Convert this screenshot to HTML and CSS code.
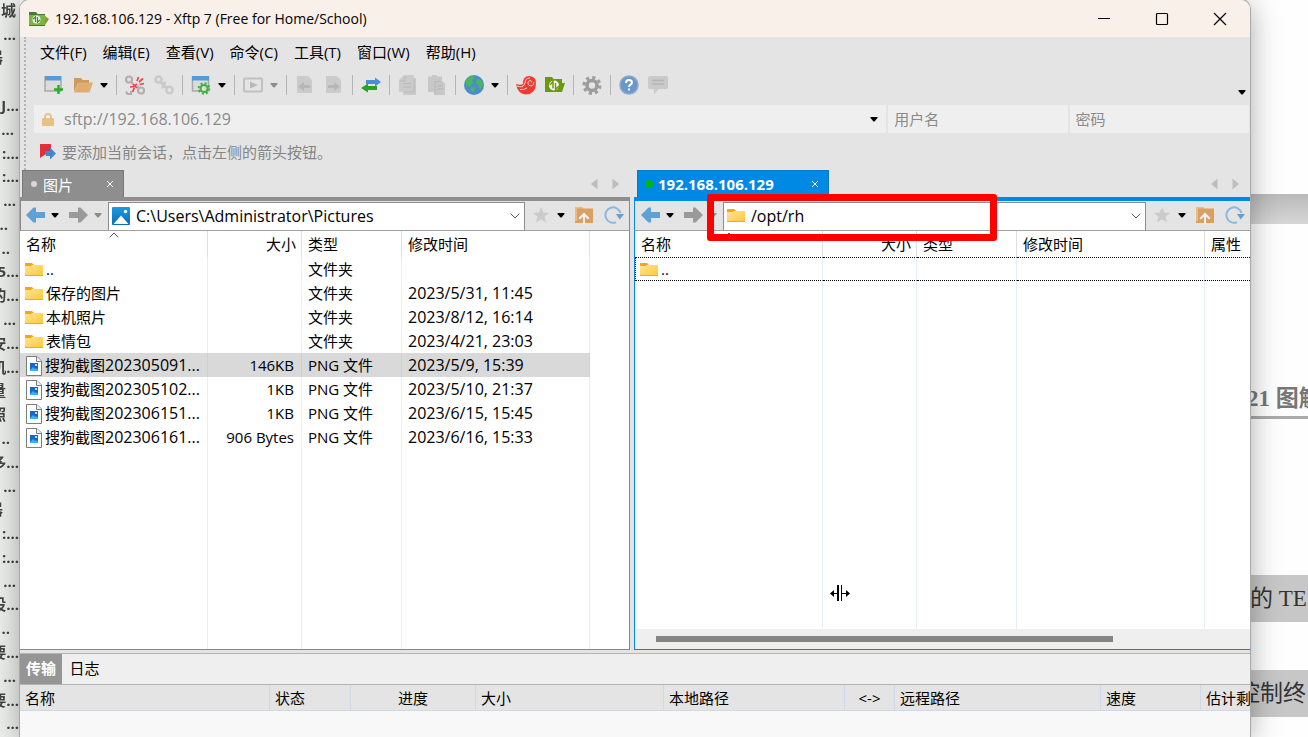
FILE: index.html
```html
<!DOCTYPE html>
<html lang="zh-CN">
<head>
<meta charset="utf-8">
<title>192.168.106.129 - Xftp 7</title>
<link rel="stylesheet" href="styles.css">
</head>
<body>
<svg class="defs" aria-hidden="true">
  <defs>
    <linearGradient id="gFolder" x1="0" y1="0" x2="1" y2="1"><stop offset="0" stop-color="#ffe499"/><stop offset="1" stop-color="#ffc933"/></linearGradient>
    <linearGradient id="gPic" x1="0" y1="0" x2="0" y2="1"><stop offset="0" stop-color="#1a9be0"/><stop offset="1" stop-color="#0d6cbd"/></linearGradient>
  </defs>
  <symbol id="folder" viewBox="0 0 18 15"><path d="M0 1h7l2 2h-2L6 5H0z" fill="#f3a712"/><path d="M0 4h6l2-1h10v11H0z" fill="url(#gFolder)"/><path d="M0 13.500h18" stroke="#e8ae28"/></symbol>
  <symbol id="file" viewBox="0 0 16 20"><path d="M.5.5H11L15.500 5v14.500H.5z" fill="#fff" stroke="#7c7c7c"/><path d="M10.500.5V5.500h5" fill="#eee" stroke="#7c7c7c"/><rect x="4" y="7" width="8" height="8" fill="#1b66c4"/><path d="M4 15v-1l3-3 2 2 1-1 2 2v1z" fill="#35b4f2"/><circle cx="10" cy="9" r="1" fill="#fff"/></symbol>
  <symbol id="picture" viewBox="0 0 18 18"><rect width="18" height="18" rx="1" fill="url(#gPic)"/><path d="M1.500 17 9 8.500 16.500 17z" fill="#fff"/><circle cx="13.500" cy="4.500" r="1.700" fill="#fff"/></symbol>
  <symbol id="caret" viewBox="0 0 8 5"><path d="M.5 0h7v1L4.500 4.500h-1L.5 1z" fill="currentColor"/></symbol>
  <symbol id="back" viewBox="0 0 20 16"><path d="M0 8 7.500.5H10V5h9v6h-9v4.500H7.500z" fill="#5fa0d6"/></symbol>
  <symbol id="forward" viewBox="0 0 20 16"><path d="M19 8 11.500.5H9V5H0v6h9v4.500h2.500z" fill="#9a9a9a"/></symbol>
  <symbol id="star" viewBox="0 0 18 18"><path d="m9 1 2.200 5.600 5.800.4-4.500 3.800 1.500 5.700L9 13.300l-5 3.200 1.500-5.700L1 7l5.800-.4z" fill="#cbcbcb"/></symbol>
  <symbol id="up" viewBox="0 0 18 18"><path d="M0 1h7l1 1.500h10V17H0z" fill="#d9a062"/><path d="M0 1h7l1 1.500H2V15H0z" fill="#e9bc84"/><path d="m9 6.500 5.500 5.500-1.500 1.500-3-2.700V17.500H8v-6.700l-3 2.700L3.500 12z" fill="#f1f1f1"/></symbol>
  <symbol id="refresh" viewBox="0 0 20 18"><path d="M12 16.200A7.700 7.700 0 1 1 16.500 7" fill="none" stroke="#8bb8e0" stroke-width="2"/><path d="M12 8H20l-4.300 5.500z" fill="#5fa0d6"/></symbol>
  <symbol id="chevron" viewBox="0 0 10 6"><path d="m.7.7 4.300 4.300L9.300.7" fill="none" stroke="#555"/></symbol>
  <symbol id="sort" viewBox="0 0 10 6"><path d="m.7 5.300 4.300-4.300 4.300 4.300" fill="none" stroke="#555"/></symbol>
  <symbol id="cross" viewBox="0 0 8 8"><path d="m1 1 6 6m0-6L1 7" stroke="#fff" stroke-width="1"/></symbol>
  <symbol id="tri-l" viewBox="0 0 8 12"><path d="M7.500.5v11L1 6z" fill="#bdbdbd"/></symbol>
  <symbol id="tri-r" viewBox="0 0 8 12"><path d="M.5.5v11L7 6z" fill="#bdbdbd"/></symbol>
</svg>

<div class="desktop">
  <div class="behind-left" aria-hidden="true">
    <p class="e16">城</p><p class="e16">...</p><p class="e4">器</p><p></p><p>J...</p><p class="e14">...</p><p>:...</p><p>:...</p><p class="e16">...</p><p class="e8">..</p><p class="e10">..</p><p>5...</p><p>的...</p><p class="e16">...</p><p>安...</p><p>机...</p><p class="e6">量</p><p class="e6">照</p><p class="e10">..</p><p>多...</p><p class="e16">...</p><p class="e4">器</p><p>:...</p><p>:...</p><p class="e16">...</p><p>设...</p><p class="e10">..</p><p>要...</p><p class="e16">...</p><p>要...</p><p>...</p>
  </div>

  <main class="window">
    <header class="titlebar">
      <svg class="app-icon" viewBox="0 0 20 16"><path d="M0 1h7l1.500 2H16v12H0z" fill="#3f7f35"/><path d="M0 4h16v10H0z" fill="#7cb342"/><path d="m16 5 4 3-4 6z" fill="#8a9a2e"/><circle cx="7.500" cy="8.500" r="4" fill="#eaf5df"/><path d="M6.500 5v6M8.500 6v6M4 8l2.500-2M11 9l-2.500 2" stroke="#4b8a2e" stroke-width="1.200"/></svg>
      <h1>192.168.106.129 - Xftp 7 (Free for Home/School)</h1>
      <div class="win-buttons">
        <button aria-label="最小化"><svg viewBox="0 0 14 14"><path d="M1 6.500h12" stroke="#000"/></svg></button>
        <button aria-label="最大化"><svg viewBox="0 0 14 14"><rect x="1.500" y="1.500" width="11" height="11" rx="1" fill="none" stroke="#000" stroke-width="1.200"/></svg></button>
        <button aria-label="关闭"><svg viewBox="0 0 14 14"><path d="m1 1 12 12m0-12L1 13" stroke="#000" stroke-width="1.200"/></svg></button>
      </div>
    </header>

    <section class="top">
      <nav class="menu">
        <button>文件(F)</button><button>编辑(E)</button><button>查看(V)</button><button>命令(C)</button><button>工具(T)</button><button>窗口(W)</button><button>帮助(H)</button>
      </nav>

      <div class="toolbar">
        <div class="group">
          <button aria-label="新建会话"><svg viewBox="0 0 20 20"><rect x="1" y="2" width="16" height="14" fill="#dcdcdc" stroke="#a9a9a9" stroke-width="1.500"/><path d="M1 1h16v4.500H1z" fill="#559bd8"/><path d="M14.500 10v9M10 14.500h9" stroke="#27ae27" stroke-width="2.400"/></svg></button>
          <button aria-label="打开"><svg viewBox="0 0 20 20"><path d="M1 3h7l1.500 2H16v3H5L1 17z" fill="#cf9a5b"/><path d="M5.500 7.500H20L16.500 17.500H1z" fill="#e0ad70"/></svg></button>
          <button class="drop" aria-label="打开选项"><svg><use href="#caret"/></svg></button>
        </div>
        <div class="group">
          <button aria-label="断开"><svg viewBox="0 0 20 20"><g fill="none" stroke="#b0b0b0" stroke-width="2.200"><circle cx="4" cy="4.500" r="3"/><circle cx="16" cy="15.500" r="3"/><path d="m6 7 2 2M12 11l2 2"/><path d="M2 16.500q-1 2 1 2.500h3v-3"/></g><path d="m12 6 1.500-4M14 7l4-3.500M14.500 9.500l4.500-1M5 12l4-.5M7.500 17l2-4.500M8 9l4 4M12 9l-3.500 2.500" stroke="#e8444c" stroke-width="1.700"/></svg></button>
          <button aria-label="重新连接"><svg viewBox="0 0 20 20"><g fill="none" stroke="#cacaca" stroke-width="2.600"><circle cx="4.500" cy="4.500" r="3"/><circle cx="15.500" cy="15" r="3.200"/><path d="m6.500 7 3 3q1 3-2 2M12 8q-3-1-2 2l3 3"/></g></svg></button>
        </div>
        <div class="group">
          <button aria-label="属性"><svg viewBox="0 0 20 20"><rect x="1.500" y="2" width="16" height="14" fill="#dcdcdc" stroke="#a9a9a9" stroke-width="1.500"/><path d="M1 1h17v4.500H1z" fill="#559bd8"/><circle cx="13" cy="13.500" r="3.500" fill="#ddd" stroke="#3fb03f" stroke-width="2"/><circle cx="13" cy="13.500" r="5.300" fill="none" stroke="#3fb03f" stroke-width="2" stroke-dasharray="2 2.160"/></svg></button>
          <button class="drop" aria-label="属性选项"><svg><use href="#caret"/></svg></button>
        </div>
        <div class="group">
          <button aria-label="运行"><svg viewBox="0 0 20 20"><rect x="1" y="3.500" width="18" height="13" rx="1" fill="none" stroke="#c0c0c0" stroke-width="2"/><path d="m7 6.500 8 3.500-8 3.500z" fill="#b9b9b9"/></svg></button>
          <button class="drop dim" aria-label="运行选项"><svg><use href="#caret"/></svg></button>
        </div>
        <div class="group">
          <button aria-label="传到左侧"><svg viewBox="0 0 20 20"><path d="M2 1h11l4 4v13H2z" fill="#cbcbcb"/><path d="M3 11.500 9 7v3h6v3H9v3z" fill="#b7b7b7"/></svg></button>
          <button aria-label="传到右侧"><svg viewBox="0 0 20 20"><path d="M2 1h11l4 4v13H2z" fill="#cbcbcb"/><path d="M16 11.500 10 7v3H4v3h6v3z" fill="#b7b7b7"/></svg></button>
        </div>
        <div class="group">
          <button aria-label="同步"><svg viewBox="0 0 20 20"><path d="M5 5h9V2.500L20 7l-6 4.500V9H5z" fill="#4a8fd6"/><path d="M16 11H7V8.500L0 13l7 4.500V15h9z" fill="#2aa22a"/></svg></button>
        </div>
        <div class="group">
          <button aria-label="复制"><svg viewBox="0 0 20 20"><path d="M8 0h8v3h2v17H5v-3H1V5l5-5z" fill="#cbcbcb"/><path d="M7 1v5H2M5 8.500h8M5 12h8M16 4v13H6" stroke="#bababa" fill="none"/></svg></button>
          <button aria-label="粘贴"><svg viewBox="0 0 20 20"><path d="M1 1.500h4V0h5v1.500h5v4l3 3V20H7v-3H1z" fill="#c8c8c8"/><path d="M8 6v13M8 6.500h6M10 11h6M10 14h6" stroke="#b8b8b8" fill="none"/></svg></button>
        </div>
        <div class="group">
          <button aria-label="语言"><svg viewBox="0 0 20 20"><circle cx="10" cy="10" r="10" fill="#4b8ccb"/><path d="M2 5q3-4 7-4l1 2-2 2 1 3-4 4-3-2zM13 4l4 1 2 5-3 5-1-4-3-3zM7 12l4 .5-.5 3.500-2 1-1.500-2z" fill="#48b95b"/></svg></button>
          <button class="drop" aria-label="语言选项"><svg><use href="#caret"/></svg></button>
        </div>
        <div class="group">
          <button aria-label="Xshell"><svg viewBox="0 0 20 20"><path d="M0 9q4 1.500 7 0Q6.500 1 13.500 1 20 1.500 20 8q0 11-10 11.500Q2 19.500 0 9z" fill="#f03a32"/><path d="M15.500 7.500q.5-2-1.500-2-2.500.5-2 3 .5 2.500 3 2.500 3-.5 3-4M14 3Q9 3 9 8q-.5 2.500-3 3.500M1 11q5 2 7-1M11 13q-3 2-7 1.500" fill="none" stroke="#f9dcd9" stroke-width=".9"/></svg></button>
          <button aria-label="Xftp"><svg viewBox="0 0 20 20"><path d="M0 2h7l1.500 2H17v4h3l-3 9H0z" fill="#6a9a0c"/><circle cx="9" cy="10.500" r="5" fill="#fff"/><path d="M8 5v8.500M10.500 8v8M5 10l3-3.500M14 11l-3.500 3.500" stroke="#6a9a0c" stroke-width="1.500"/></svg></button>
        </div>
        <div class="group">
          <button aria-label="选项"><svg viewBox="0 0 20 20"><circle cx="10" cy="10.500" r="5" fill="none" stroke="#9c9c9c" stroke-width="3.600"/><circle cx="10" cy="10.500" r="8" fill="none" stroke="#9c9c9c" stroke-width="3" stroke-dasharray="3.200 3.080"/></svg></button>
        </div>
        <div class="group">
          <button aria-label="帮助"><svg viewBox="0 0 20 20"><circle cx="10" cy="10" r="9" fill="#6799d0" stroke="#92a9c2" stroke-width="1.500"/><path d="M7 8q0-3 3-3t3 2.500Q13 9 11 10q-1 .6-1 2M10 13.500v2" fill="none" stroke="#fff" stroke-width="2"/></svg></button>
          <button aria-label="反馈"><svg viewBox="0 0 20 20"><path d="M2 1h16q2 0 2 2v9q0 2-2 2h-7l-5 5v-5H2q-2 0-2-2V3q0-2 2-2z" fill="#cacaca"/><path d="M4 5.500h12M4 9h12" stroke="#b5b5b5" stroke-width="1.300"/></svg></button>
        </div>
        <button class="drop overflow" aria-label="更多工具"><svg><use href="#caret"/></svg></button>
      </div>

      <form class="login">
        <div class="address">
          <svg class="lock" viewBox="0 0 12 13"><path d="M3 6V4a3 3 0 0 1 6 0v2" fill="none" stroke="#e8c592" stroke-width="2"/><rect y="5" width="12" height="8" rx="1" fill="#e8bf84"/></svg>
          <input aria-label="地址" value="sftp://192.168.106.129">
          <button type="button" class="drop" aria-label="地址列表"><svg><use href="#caret"/></svg></button>
        </div>
        <input class="cred" aria-label="用户名" placeholder="用户名">
        <input class="cred" aria-label="密码" placeholder="密码">
      </form>

      <div class="hint">
        <button aria-label="添加会话"><svg viewBox="0 0 16 17"><path d="M0 1h11v8l-5 2-6 4z" fill="#e0303a"/><path d="M4.500 8H10V4.500L16 10.500l-6 6V13H6z" fill="#3f87cf"/></svg></button>
        <p>要添加当前会话，点击左侧的箭头按钮。</p>
      </div>
    </section>

    <section class="panes">
      <div class="pane local">
        <div class="tabs">
          <div class="tab"><i class="dot"></i><span>图片</span><button aria-label="关闭标签"><svg><use href="#cross"/></svg></button></div>
          <div class="tab-nav"><button aria-label="上一个"><svg><use href="#tri-l"/></svg></button><button aria-label="下一个"><svg><use href="#tri-r"/></svg></button></div>
        </div>
        <div class="nav">
          <button class="go" aria-label="后退"><svg><use href="#back"/></svg></button>
          <button class="drop" aria-label="后退历史"><svg><use href="#caret"/></svg></button>
          <button class="go" aria-label="前进"><svg><use href="#forward"/></svg></button>
          <button class="drop dim" aria-label="前进历史"><svg><use href="#caret"/></svg></button>
          <div class="path"><svg class="pic"><use href="#picture"/></svg><input aria-label="本地路径" value="C:\Users\Administrator\Pictures"><button aria-label="路径列表"><svg class="chev"><use href="#chevron"/></svg></button></div>
          <button class="tool" aria-label="收藏"><svg><use href="#star"/></svg></button>
          <button class="drop" aria-label="收藏列表"><svg><use href="#caret"/></svg></button>
          <button class="tool" aria-label="上级目录"><svg><use href="#up"/></svg></button>
          <button class="tool" aria-label="刷新"><svg><use href="#refresh"/></svg></button>
        </div>
        <div class="list">
          <table class="files">
            <colgroup><col class="c-name"><col class="c-size"><col class="c-type"><col class="c-date"><col></colgroup>
            <thead><tr><th class="sorted">名称<svg><use href="#sort"/></svg></th><th class="num">大小</th><th>类型</th><th>修改时间</th><th></th></tr></thead>
            <tbody>
              <tr><td><svg class="fold"><use href="#folder"/></svg>..</td><td></td><td>文件夹</td><td></td><td></td></tr>
              <tr><td><svg class="fold"><use href="#folder"/></svg>保存的图片</td><td></td><td>文件夹</td><td>2023/5/31, 11:45</td><td></td></tr>
              <tr><td><svg class="fold"><use href="#folder"/></svg>本机照片</td><td></td><td>文件夹</td><td>2023/8/12, 16:14</td><td></td></tr>
              <tr><td><svg class="fold"><use href="#folder"/></svg>表情包</td><td></td><td>文件夹</td><td>2023/4/21, 23:03</td><td></td></tr>
              <tr class="selected"><td><svg class="doc"><use href="#file"/></svg>搜狗截图<b>202305091...</b></td><td class="num">146KB</td><td>PNG 文件</td><td>2023/5/9, 15:39</td><td></td></tr>
              <tr><td><svg class="doc"><use href="#file"/></svg>搜狗截图<b>202305102...</b></td><td class="num">1KB</td><td>PNG 文件</td><td>2023/5/10, 21:37</td><td></td></tr>
              <tr><td><svg class="doc"><use href="#file"/></svg>搜狗截图<b>202306151...</b></td><td class="num">1KB</td><td>PNG 文件</td><td>2023/6/15, 15:45</td><td></td></tr>
              <tr><td><svg class="doc"><use href="#file"/></svg>搜狗截图<b>202306161...</b></td><td class="num">906 Bytes</td><td>PNG 文件</td><td>2023/6/16, 15:33</td><td></td></tr>
              <tr class="fill"><td></td><td></td><td></td><td></td><td></td></tr>
            </tbody>
          </table>
        </div>
      </div>

      <div class="pane remote">
        <div class="tabs">
          <div class="tab"><i class="dot"></i><span>192.168.106.129</span><button aria-label="关闭标签"><svg><use href="#cross"/></svg></button></div>
          <div class="tab-nav"><button aria-label="上一个"><svg><use href="#tri-l"/></svg></button><button aria-label="下一个"><svg><use href="#tri-r"/></svg></button></div>
        </div>
        <div class="nav">
          <button class="go" aria-label="后退"><svg><use href="#back"/></svg></button>
          <button class="drop" aria-label="后退历史"><svg><use href="#caret"/></svg></button>
          <button class="go" aria-label="前进"><svg><use href="#forward"/></svg></button>
          <button class="drop dim" aria-label="前进历史"><svg><use href="#caret"/></svg></button>
          <div class="path"><svg class="fold"><use href="#folder"/></svg><input aria-label="远程路径" value="/opt/rh"><button aria-label="路径列表"><svg class="chev"><use href="#chevron"/></svg></button></div>
          <button class="tool" aria-label="收藏"><svg><use href="#star"/></svg></button>
          <button class="drop" aria-label="收藏列表"><svg><use href="#caret"/></svg></button>
          <button class="tool" aria-label="上级目录"><svg><use href="#up"/></svg></button>
          <button class="tool" aria-label="刷新"><svg><use href="#refresh"/></svg></button>
        </div>
        <div class="list">
          <table class="files">
            <colgroup><col class="c-name"><col class="c-size"><col class="c-type"><col class="c-date"><col></colgroup>
            <thead><tr><th class="sorted">名称<svg><use href="#sort"/></svg></th><th class="num">大小</th><th>类型</th><th>修改时间</th><th>属性</th></tr></thead>
            <tbody>
              <tr class="focused"><td><svg class="fold"><use href="#folder"/></svg>..</td><td></td><td></td><td></td><td></td></tr>
              <tr class="fill"><td></td><td></td><td></td><td></td><td></td></tr>
            </tbody>
          </table>
        </div>
        <div class="scroll"><div class="thumb"></div></div>
        <div class="highlight"></div>
        <svg class="cursor" viewBox="0 0 20 16"><path d="M8 0v16" stroke="#000" stroke-width="2"/><path d="M11.500 0v16M2 8.500h6M12 8.500h6" stroke="#000"/><path d="m0 8.500 4-3.500v7zM20 8.500 16 5v7z"/></svg>
      </div>
    </section>

    <section class="queue">
      <div class="queue-tabs"><button class="on">传输</button><button>日志</button></div>
      <table class="jobs">
        <colgroup><col class="j-name"><col class="j-state"><col class="j-prog"><col class="j-size"><col class="j-local"><col class="j-dir"><col class="j-remote"><col class="j-speed"><col></colgroup>
        <thead><tr><th>名称</th><th>状态</th><th class="mid">进度</th><th>大小</th><th>本地路径</th><th class="mid">&lt;-&gt;</th><th>远程路径</th><th>速度</th><th>估计剩</th></tr></thead>
      </table>
    </section>
  </main>

  <div class="behind-right" aria-hidden="true">
    <div class="rule"></div>
    <h2>21 图解</h2>
    <p>的 TE</p>
    <p class="cut">控制终</p>
  </div>
</div>
</body>
</html>
```
FILE: styles.css
```css
* { box-sizing: border-box; }
html, body { height: 100%; margin: 0; }
body, button, input { font-family: "Open Sans", "Noto Sans CJK SC", sans-serif; font-size: 15px; color: #000; }
h1, h2, p { margin: 0; font-weight: 400; }
button { display: flex; align-items: center; justify-content: center; padding: 0; border: 0; background: none; }
input { min-width: 0; padding: 0; border: 0; background: none; outline: 0; }
svg { display: block; flex: none; }
.defs { position: absolute; width: 0; height: 0; }

.desktop { display: flex; height: 100vh; overflow: hidden; background: #fdfefd; }

/* Documents visible beside the window */
.behind-left { display: flex; flex-direction: column; width: 20px; padding-right: 1px; overflow: hidden; background: #eef0ee; color: #444; filter: blur(0.5px); }
.behind-left p { display: flex; flex: 1; align-items: center; justify-content: flex-end; min-height: 0; padding-bottom: 4px; font-weight: 700; line-height: 20px; white-space: nowrap; }
.behind-left .e16 { padding-right: 3px; }
.behind-left .e14 { padding-right: 5px; }
.behind-left .e10 { padding-right: 9px; }
.behind-left .e8 { padding-right: 11px; }
.behind-left .e6 { padding-right: 13px; }
.behind-left .e4 { padding-right: 16px; }
.behind-right { width: 58px; overflow: hidden; color: #555; font-family: "Liberation Serif", "Noto Sans CJK SC", serif; white-space: nowrap; }
.behind-right .rule { height: 30px; margin-top: 194px; background: linear-gradient(#b9bab9, #d5d6d5); }
.behind-right h2 { margin-top: 160px; padding-bottom: 2px; border-bottom: 3px solid #aaa; color: #777; font-size: 23px; font-weight: 700; line-height: 30px; text-indent: -3px; }
.behind-right p { height: 47px; margin-top: 156px; background: #c6c7c6; color: #333; font-size: 23px; line-height: 47px; }
.behind-right p.cut { margin-top: 48px; text-indent: -13px; }

/* Window frame */
.window { position: relative; z-index: 1; display: flex; flex: 1; flex-direction: column; min-width: 0; overflow: hidden; border-radius: 9px 9px 0 0; background: #e4e4e4; box-shadow: 0 0 0 1px #a8aaa8, 0 4px 30px rgba(0, 0, 0, 0.35); }
.titlebar { display: flex; flex: none; align-items: center; height: 37px; padding-left: 9px; background: #f9f0e9; }
.app-icon { width: 20px; height: 16px; }
h1 { flex: 1; margin-left: 6px; font-size: 14px; }
.win-buttons { display: flex; padding-right: 1px; }
.win-buttons button { width: 58px; height: 36px; }
.win-buttons svg { width: 14px; height: 14px; }

/* Menus and toolbars */
.top { flex: none; margin-left: 4px; border-left: 2px dotted #b4b4b4; }
.menu { display: flex; gap: 16px; padding: 2px 14px; }
.menu button { height: 24px; }
.toolbar { display: flex; height: 40px; padding-left: 10px; }
.group { display: flex; align-items: center; gap: 9px; padding: 0 8px; background: linear-gradient(#b4b4b4, #b4b4b4) left center / 1px 20px no-repeat; }
.group + .group { padding-left: 9px; }
.group:first-child { background: none; }
.group svg { width: 20px; height: 20px; }
.drop svg, .group .drop svg { width: 8px; height: 5px; }
.group .drop { margin-left: -2px; }
.drop.dim { color: #8c8c8c; }
.overflow { margin: 14px 4px 0 auto; }
.login { display: flex; gap: 2px; height: 28px; margin: 0 1px 0 8px; }
.address { display: flex; flex: 849; align-items: center; min-width: 0; padding: 0 8px; background: #efefef; }
.address input { flex: 1; margin-left: 10px; color: #8a8a8a; font-size: 16px; }
.lock { width: 12px; height: 13px; }
.cred { flex: 170; padding: 0 6px; background: #efefef; }
.cred::placeholder { color: #8a8a8a; opacity: 1; }
.hint { display: flex; align-items: center; gap: 6px; height: 37px; padding: 0 14px; color: #858585; }
.hint svg { width: 16px; height: 17px; }

/* File panes */
.panes { display: flex; flex: 1; gap: 4px; min-height: 0; }
.pane { position: relative; display: flex; flex-direction: column; min-width: 0; }
.local { flex: 610; --accent: #8e8e8e; }
.remote { flex: 616; --accent: #0088e5; }
.tabs { display: flex; flex: none; justify-content: space-between; height: 27px; padding-left: 2px; }
.tab { display: flex; align-items: center; width: 102px; padding: 0 9px 0 8px; border: 1px solid #777; border-bottom: 0; background: var(--accent); color: #fff; }
.tab span { flex: 1; margin-left: 6px; }
.tab .dot { width: 6px; height: 6px; border-radius: 50%; background: #d8d8d8; }
.tab svg { width: 8px; height: 8px; }
.remote .tabs { padding-left: 3px; }
.remote .tab { width: 192px; padding-left: 7px; border-color: #0a78c8; font-weight: 700; }
.remote .tab .dot { width: 8px; height: 8px; background: #00b814; }
.remote .tab span { margin-left: 5px; }
.tab-nav { display: flex; gap: 14px; padding-right: 10px; }
.tab-nav svg { width: 8px; height: 12px; }
.nav { display: flex; flex: none; align-items: center; height: 34px; padding: 0 5px 1px; border: 1px solid #888; border-top: 4px solid var(--accent); border-bottom-color: #a0a0a0; }
.remote .nav { border-left-color: var(--accent); border-right: 0; padding-left: 6px; }
.go svg { width: 20px; height: 16px; }
.nav .drop { margin: 0 5px; }
.nav .go + .drop { margin: 0 10px 0 5px; }
.nav .drop + .go + .drop { margin: 0 6px 0 5px; }
.path { display: flex; flex: 1; align-self: stretch; align-items: center; min-width: 0; margin: 1px 6px -1px 0; padding: 0 4px 2px 3px; border: 1px solid #8c8c8c; border-bottom: 0; background: #fff; }
.path input { flex: 1; margin-left: 6px; font-size: 16px; }
.pic { width: 18px; height: 18px; }
.fold { width: 18px; height: 15px; }
.doc { width: 16px; height: 20px; }
.chev { width: 10px; height: 6px; }
.tool svg { width: 20px; height: 18px; }
.nav .tool + .drop { margin: 0 9px 0 6px; }
.nav .tool + .tool { margin-left: 10px; }
.list { flex: 1; min-height: 0; overflow: hidden; border-left: 1px solid #bbb; background: #fff; }
.local .list { border: solid #888; border-width: 0 1px 1px 0; }
.remote .list { border-left-color: var(--accent); }

table { border-collapse: separate; border-spacing: 0; table-layout: fixed; }
th, td { overflow: hidden; padding: 0; font-weight: 400; text-align: left; white-space: nowrap; }
.files { width: 100%; height: 100%; }
.c-name { width: 188px; }
.c-size { width: 94px; }
.c-type { width: 100px; }
.c-date { width: 188px; }
.files th { height: 26px; padding: 0 6px; border-right: 1px solid #dfdfdf; line-height: 24px; }
.files th.num { padding-right: 5px; text-align: right; }
.files .sorted { position: relative; }
.sorted svg { position: absolute; top: 1px; left: 50%; width: 10px; height: 6px; margin-left: -5px; }
.files td { height: 24px; padding: 0 6px; border-right: 1px solid #e4effb; line-height: 24px; }
.files td:nth-child(4) { font-size: 16px; }
.files td.num { padding-right: 7px; text-align: right; }
.files th:last-child, .files td:last-child { border-right: 0; }
.files td:first-child { padding-left: 5px; }
.files td svg { display: inline-block; margin: 0 3px 2px 0; vertical-align: middle; }
.files td .doc { margin: -2px 3px 0 1px; }
.files b { font-size: 16px; font-weight: 400; line-height: 20px; }
.selected td { background: #d9d9d9; border-color: #c9d2dc; }
.selected td:last-child { background: none; }
.focused td { border-top: 1px dotted #000; border-bottom: 1px dotted #000; line-height: 22px; }
.focused td:first-child { border-left: 1px dotted #000; padding-left: 4px; }
.files .fill td { height: auto; }
.scroll { flex: none; height: 21px; padding: 7px 0 0 21px; border: solid var(--accent); border-width: 0 0 1px 1px; background: #efefef; }
.thumb { width: 77%; height: 6px; background: #858585; }
.highlight { position: absolute; top: 24px; left: 73px; width: 290px; height: 47px; border: 7px solid #f00; border-radius: 3px; }
.cursor { position: absolute; top: 415px; left: 196px; width: 20px; height: 16px; }

/* Transfer queue */
.queue { flex: none; height: 84px; margin-top: 3px; border-top: 1px solid #b4b4b4; background: #f8f8f8; }
.queue-tabs { display: flex; height: 31px; border-bottom: 1px solid #b4b4b4; background: #efefef; }
.queue-tabs button { width: 42px; padding-bottom: 3px; }
.queue-tabs button + button { width: 45px; }
.queue-tabs .on { background: #959595; color: #fff; font-weight: 700; }
.jobs { width: 100%; background: #e4e4e4; }
.jobs th { height: 26px; padding: 0 5px; border-right: 1px solid #cfd8e6; border-bottom: 1px solid #cfd8e6; line-height: 24px; text-overflow: clip; }
.jobs th:last-child { border-right: 0; padding-right: 0; }
.jobs .mid { text-align: center; }
.j-name { width: 250px; }
.j-state { width: 81px; }
.j-prog { width: 125px; }
.j-size { width: 188px; }
.j-local { width: 181px; }
.j-dir { width: 50px; }
.j-remote { width: 206px; }
.j-speed { width: 100px; }
```
